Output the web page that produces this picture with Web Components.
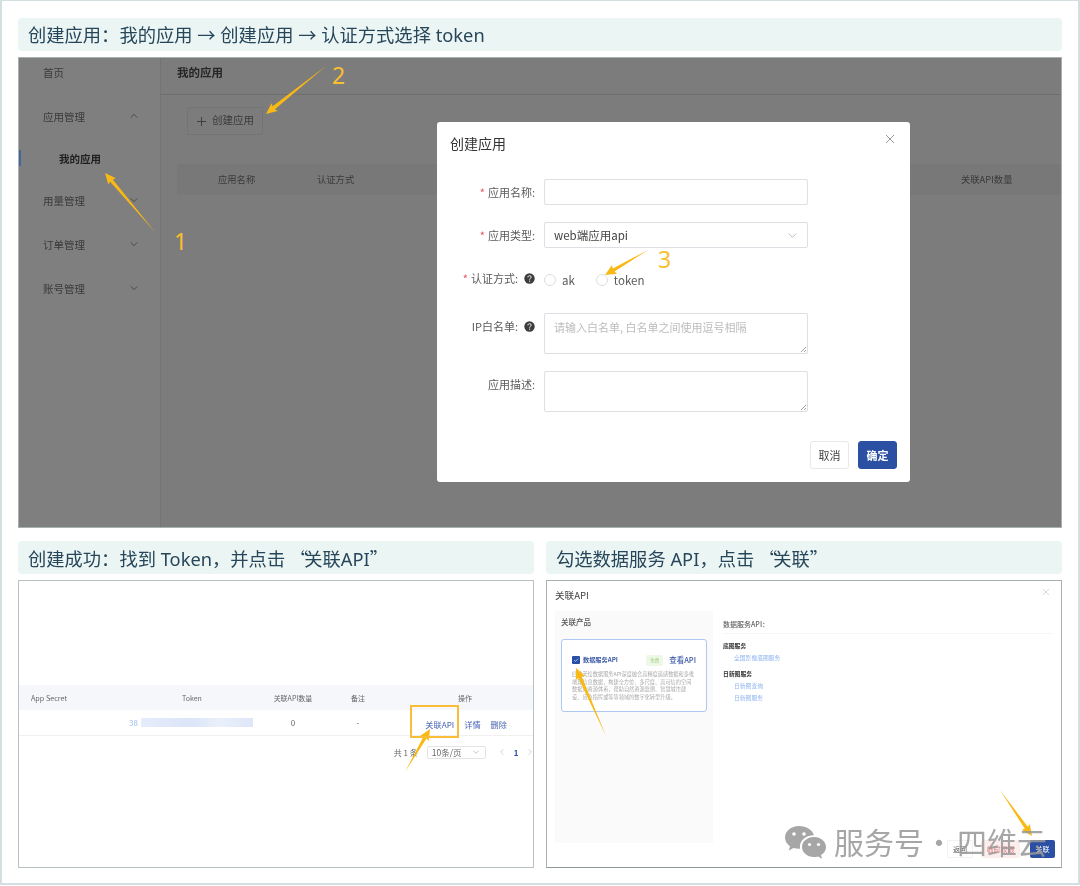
<!DOCTYPE html>
<html lang="zh">
<head>
<meta charset="utf-8">
<title>创建应用</title>
<style>
html, body { margin: 0; padding: 0; background: #fff; }
body { font-family: "Noto Sans CJK SC", "Noto Sans", sans-serif; }
</style>
</head>
<body>
<guide-page>
  <step-block heading="创建应用：我的应用 → 创建应用 → 认证方式选择 token"><console-shot></console-shot></step-block>
  <div slot="bottom"><step-block heading="创建成功：找到 Token，并点击 “关联API”"><token-shot></token-shot></step-block></div>
  <div slot="bottom"><step-block heading="勾选数据服务 API，点击 “关联”"><link-shot></link-shot></step-block></div>
</guide-page>

<script>
const FONT = '"Noto Sans CJK SC", "Noto Sans", sans-serif';
const chevron = (dir, size, color) => `<svg width="${size}" height="${size}" viewBox="0 0 12 12" fill="none" stroke="${color}" stroke-width="1"><path d="${dir == 'up' ? 'M2 8l4-4 4 4' : dir == 'left' ? 'M8 2L4 6l4 4' : dir == 'right' ? 'M4 2l4 4-4 4' : 'M2 4l4 4 4-4'}"/></svg>`;
const helpIcon = `<svg width="11" height="11" viewBox="0 0 11 11"><circle cx="5.5" cy="5.5" r="5.2" fill="#3d3d3d"/><path d="M3.9 4.3c0-2.1 3.3-2.1 3.3-.2 0 1.2-1.6 1.2-1.6 2.5" fill="none" stroke="#fff" stroke-width="1"/><circle cx="5.6" cy="8.1" r=".65" fill="#fff"/></svg>`;
const grip = `<svg width="7" height="7" viewBox="0 0 7 7" stroke="#777" stroke-width=".7"><path d="M1 6l5-5M4 6l2-2"/></svg>`;

class GuidePage extends HTMLElement {
    constructor() {
        super();
        this.attachShadow({mode: 'open'}).innerHTML = `<style>
            :host { display: block; position: relative; width: 1080px; height: 886px; overflow: hidden; font-family: ${FONT}; }
            .frame { box-sizing: border-box; height: 885px; border: solid #d3dfe0; border-width: 1px 2px 2px 2px; padding: 17px 16px 0; display: flex; flex-direction: column; gap: 13px; }
            .bottom { display: grid; grid-template-columns: 516px 516px; gap: 12px; }
        </style>
        <div class="frame"><slot></slot><div class="bottom"><slot name="bottom"></slot></div></div>
        <arrow-layer></arrow-layer>
        <wx-watermark></wx-watermark>`;
    }
}

class StepBlock extends HTMLElement {
    constructor() {
        super();
        this.attachShadow({mode: 'open'}).innerHTML = `<style>
            :host { display: block; }
            .title { height: 33px; box-sizing: border-box; padding: 1px 0 0 10px; margin-bottom: 6px; background: #ebf6f4; border-radius: 4px; color: #28465a; font-family: "Noto Sans", "Noto Sans CJK SC", sans-serif; font-size: 18.3px; line-height: 32px; white-space: nowrap; filter: blur(.35px); }
            .q { font-family: "Noto Sans CJK SC", sans-serif; margin-right: -4px; }
        </style><div class="title"></div><slot></slot>`;
        // the curly quotes keep the wide CJK form, so they get their own font
        this.shadowRoot.querySelector('.title').innerHTML = this.getAttribute('heading').replace(/[“”]/g, '<span class="q">$&</span>');
    }
}

class NavRow extends HTMLElement {
    constructor() {
        super();
        const arrow = this.getAttribute('arrow');
        this.attachShadow({mode: 'open'}).innerHTML = `<style>
            :host { display: flex; align-items: center; justify-content: space-between; height: 44px; padding: 0 21px 0 24px; font-size: 10.5px; color: #3a3a3a; }
            :host([sub]) { height: 40px; padding-left: 40px; font-weight: 700; color: #1f1f1f; position: relative; }
            :host([sub])::before { content: ""; position: absolute; left: 0; top: 12px; width: 2px; height: 16px; background: #44659a; }
            svg { display: block; }
        </style><span><slot></slot></span>${arrow ? chevron(arrow, 10, '#404040') : ''}`;
    }
}

class ConsoleShot extends HTMLElement {
    constructor() {
        super();
        this.attachShadow({mode: 'open'}).innerHTML = `<style>
            :host { display: block; box-sizing: border-box; height: 471px; border: 1px solid #a9b0b0; position: relative; overflow: hidden; background: #7c7c7c; font-size: 10.5px; color: #3a3a3a; filter: blur(.45px); }
            .layout { display: grid; grid-template-columns: 142px 1fr; height: 100%; }
            aside { background: #7f7f7f; border-right: 1px solid #747474; }
            .nav { margin-top: -8px; }
            .head { height: 37px; box-sizing: border-box; padding: 6px 0 0 16px; border-bottom: 1px solid #6e6e6e; font-size: 11.5px; font-weight: 700; color: #262626; line-height: 16px; }
            .add { margin: 12px 0 0 26px; width: 76px; height: 28px; box-sizing: border-box; border: 1px solid #747474; border-radius: 2px; display: flex; align-items: center; gap: 5px; padding-left: 8px; line-height: 24px; }
            .add span { position: relative; top: -1px; }
            .add svg { display: block; }
            .thead { margin: 29px 0 0 16px; height: 31px; background: #787878; position: relative; font-size: 9.3px; }
            .thead span { position: absolute; top: 8px; line-height: 14px; white-space: nowrap; }
        </style>
        <div class="layout">
            <aside><div class="nav">
                <nav-row>首页</nav-row>
                <nav-row arrow="up">应用管理</nav-row>
                <nav-row sub>我的应用</nav-row>
                <nav-row arrow="down">用量管理</nav-row>
                <nav-row arrow="down">订单管理</nav-row>
                <nav-row arrow="down">账号管理</nav-row>
            </div></aside>
            <main>
                <div class="head">我的应用</div>
                <div class="add"><svg width="11" height="11" viewBox="0 0 11 11" stroke="#3f3f3f" stroke-width="1"><path d="M5.5 1v9M1 5.5h9"/></svg><span>创建应用</span></div>
                <div class="thead"><span style="left:41px">应用名称</span><span style="left:140px">认证方式</span><span style="left:784px">关联API数量</span></div>
            </main>
        </div>
        <create-dialog></create-dialog>`;
    }
}

class FormRow extends HTMLElement {
    constructor() {
        super();
        const req = this.hasAttribute('required') ? '<i>*</i>' : '';
        const help = this.hasAttribute('help') ? helpIcon : '';
        this.attachShadow({mode: 'open'}).innerHTML = `<style>
            :host { display: grid; grid-template-columns: 98px 264px; column-gap: 9px; font-size: 11px; color: #5a5a5a; }
            label { display: flex; justify-content: flex-end; align-items: center; gap: 4px; height: 26px; white-space: nowrap; line-height: 14px; }
            i { color: #e8505b; font-style: normal; margin-right: -1px; }
            svg { display: block; margin-left: 2px; }
        </style><label>${req}<span>${this.getAttribute('label')}</span>${help}</label><div><slot></slot></div>`;
    }
}

class CreateDialog extends HTMLElement {
    constructor() {
        super();
        this.attachShadow({mode: 'open'}).innerHTML = `<style>
            :host { position: absolute; left: 418px; top: 64px; width: 473px; height: 360px; box-sizing: border-box; background: #fff; border-radius: 3px; padding: 11px 13px 13px; display: flex; flex-direction: column; font-size: 11px; color: #555; }
            .top { display: flex; justify-content: space-between; height: 46px; }
            h2 { margin: 0; font-size: 14px; font-weight: 400; line-height: 20px; color: #333; }
            .rows { margin-left: -13px; }
            form-row { margin-bottom: 17px; }
            .box { box-sizing: border-box; border: 1px solid #dcdfe3; border-radius: 2px; height: 26px; display: flex; align-items: center; justify-content: space-between; padding: 0 9px; position: relative; }
            .area { align-items: flex-start; padding-top: 6px; line-height: 14px; color: #bdbdbd; height: 41px; }
            .area svg { position: absolute; right: 0; bottom: 0; }
            .radios { display: flex; align-items: center; gap: 6px; height: 26px; margin-top: 2px; margin-bottom: -2px; font-size: 11.5px; }
            .dot { width: 10px; height: 10px; border: 1px solid #dcdfe3; border-radius: 50%; }
            .radios b { font-weight: 400; margin-right: 15px; }
            .btns { margin-top: auto; display: flex; justify-content: flex-end; gap: 9px; }
            .btn { width: 39px; height: 28px; box-sizing: border-box; border: 1px solid #e8e8e8; border-radius: 3px; text-align: center; line-height: 26px; color: #444; }
            .ok { background: #2a4fa3; border-color: #2a4fa3; color: #fff; font-weight: 700; }
            .web { font-size: 11.5px; color: #444; }
        </style>
        <div class="top"><h2>创建应用</h2><svg width="12" height="12" viewBox="0 0 12 12" stroke="#9a9a9a" stroke-width="1" style="margin-right:1px"><path d="M2 2l8 8M10 2l-8 8"/></svg></div>
        <div class="rows">
            <form-row label="应用名称:" required><div class="box"></div></form-row>
            <form-row label="应用类型:" required><div class="box"><span class="web">web端应用api</span>${chevron('down', 11, '#b5b5b5')}</div></form-row>
            <form-row label="认证方式:" required help style="margin-bottom:22px"><div class="radios"><span class="dot"></span><b>ak</b><span class="dot"></span><b>token</b></div></form-row>
            <form-row label="IP白名单:" help><div class="box area">请输入白名单, 白名单之间使用逗号相隔${grip}</div></form-row>
            <form-row label="应用描述:"><div class="box area">${grip}</div></form-row>
        </div>
        <div class="btns"><div class="btn">取消</div><div class="btn ok">确定</div></div>`;
    }
}

class TokenShot extends HTMLElement {
    constructor() {
        super();
        this.attachShadow({mode: 'open'}).innerHTML = `<style>
            :host { display: block; box-sizing: border-box; height: 288px; border: 1px solid #b9c0c2; background: #fff; color: #666; font-size: 7px; filter: blur(.4px); padding-top: 104px; }
            .row { display: grid; grid-template-columns: 112px 122px 80px 50px 1fr; align-items: center; height: 25px; text-align: center; white-space: nowrap; }
            .row > :first-child { text-align: left; padding-left: 12px; }
            .thead { background: #f5f7fa; }
            .tbody { border-bottom: 1px solid #f0f0f0; font-size: 8px; }
            .tok { display: flex; align-items: center; color: #9dbcf0; }
            .tok i { font-style: normal; margin-left: -2px; }
            .tok span { margin-left: 3px; width: 116px; height: 9px; background: linear-gradient(90deg, #e6ecfa, #dbe5f8 45%, #eaf0fb 70%, #dde6f8); }
            .ops { display: flex; justify-content: flex-end; gap: 10px; padding-right: 26px; color: #4a66b4; font-size: 8.2px; position: relative; top: 1px; }
            .pager { display: flex; align-items: center; justify-content: flex-end; margin-top: 9px; font-size: 8px; height: 14px; }
            .size { margin-left: 9px; width: 59px; height: 13px; box-sizing: border-box; border: 1px solid #e4e4e4; border-radius: 2px; display: flex; align-items: center; justify-content: space-between; padding: 0 6px 0 4px; font-size: 8.5px; }
            .page { color: #2a4fa3; font-weight: 700; margin: 0 7.5px 0 8px; }
            .pager svg { display: block; }
            .pager svg:last-child { margin-right: -1px; }
        </style>
        <div class="row thead"><div style="font-size:7.2px">App Secret</div><div>Token</div><div>关联API数量</div><div>备注</div><div style="padding-left:14px">操作</div></div>
        <div class="row tbody"><div></div><div class="tok"><i>38</i><span></span></div><div>0</div><div>-</div><div class="ops"><span>关联API</span><span>详情</span><span>删除</span></div></div>
        <div class="pager"><span>共 1 条</span><div class="size">10条/页${chevron('down', 8, '#aaa')}</div><span style="width:12px"></span>${chevron('left', 8, '#bbb')}<span class="page">1</span>${chevron('right', 8, '#bbb')}</div>`;
    }
}

class LinkShot extends HTMLElement {
    constructor() {
        super();
        this.attachShadow({mode: 'open'}).innerHTML = `<style>
            :host { display: block; box-sizing: border-box; height: 288px; border: 1px solid #a9b0b2; border-bottom-color: #8f9698; background: #fff; color: #444; filter: blur(.4px); padding: 7px 8px 0; position: relative; }
            .top { display: flex; justify-content: space-between; height: 23px; font-size: 9.6px; line-height: 14px; }
            .body { display: grid; grid-template-columns: 158px 1fr; column-gap: 10px; height: 232px; }
            .left { background: #fafafa; padding: 5px 6px 0; font-size: 7.5px; font-weight: 500; color: #555; line-height: 12px; }
            .card { margin-top: 11px; height: 73px; box-sizing: border-box; border: 1px solid #adc8f2; border-radius: 3px; background: #fff; padding: 14px 10px 0; }
            .line { display: flex; align-items: center; font-size: 6.2px; color: #3d5aa8; font-weight: 700; height: 12px; }
            .check { width: 8px; height: 8px; background: #2a4fa3; border-radius: 1px; margin-right: 3px; display: block; }
            .tag { margin-left: auto; background: #eef8e6; color: #a5cf88; font-size: 4.5px; padding: 0 4px; line-height: 11px; border-radius: 2px; font-weight: 400; }
            .view { margin-left: 6px; font-size: 7.5px; font-weight: 500; }
            p { margin: 4px 0 0; font-size: 5.2px; line-height: 7.7px; color: #a8a8a8; font-weight: 400; }
            .right { padding: 7px 0 0; font-size: 5.5px; line-height: 11px; }
            .cap { font-size: 7px; font-weight: 500; color: #666; height: 15px; line-height: 12px; border-bottom: 1px solid #f6f6f6; margin-bottom: 7px; }
            h4 { margin: 0; font-size: 5.8px; font-weight: 700; color: #333; line-height: 10px; }
            .link { color: #8fb4ef; padding-left: 11px; font-size: 5.8px; line-height: 12px; display: block; }
            h4 + .link { margin-top: 1px; }
            .link + h4 { margin-top: 5px; }
            .foot { position: absolute; right: 6px; bottom: 9px; display: flex; font-size: 7px; white-space: nowrap; }
            .b { box-sizing: border-box; height: 18px; line-height: 18px; border-radius: 2px; text-align: center; }
            .back { width: 26px; border: 1px solid #f2f2f2; line-height: 16px; color: #555; margin-right: 8px; }
            .warn { width: 39px; background: #fdeeee; color: #e07a7a; margin-right: 10px; }
            .go { width: 25px; background: #2a4fa3; color: #fff; }
        </style>
        <div class="top"><span>关联API</span><svg width="8" height="8" viewBox="0 0 8 8" stroke="#cfcfcf" stroke-width=".8" style="margin:0 3px 0 0"><path d="M1 1l6 6M7 1L1 7"/></svg></div>
        <div class="body">
            <div class="left">关联产品
                <div class="card">
                    <div class="line"><svg class="check" viewBox="0 0 8 8"><path d="M2 4l1.500 1.500L6 2.700" fill="none" stroke="#cfe0ff" stroke-width=".7"/></svg>数据服务API<span class="tag">免费</span><span class="view">查看API</span></div>
                    <p>四维天绘数据服务API深度融合高精度遥感数据和多维地理信息数据，构建全方位、多尺度、高可信的空间数据的资源体系，帮助自然资源监测、智慧城市建设、应急指挥或等等领域的数字化转型升级。</p>
                </div>
            </div>
            <div class="right">
                <div class="cap">数据服务API：</div>
                <h4>底图服务</h4><span class="link">全国影像底图服务</span>
                <h4>日新图服务</h4><span class="link">日新图查询</span><span class="link">日新图服务</span>
            </div>
        </div>
        <div class="foot"><span class="b back">返回</span><span class="b warn">临时权限</span><span class="b go">关联</span></div>`;
    }
}

class ArrowLayer extends HTMLElement {
    constructor() {
        super();
        const arrows = [[155,232,105,173],[326,66,266,114],[648,250,605,275],[405,772,430,729],[606,736,576,668],[1000,790,1032,836]];
        const shapes = arrows.map(([x1, y1, x2, y2]) => {
            const len = Math.hypot(x2 - x1, y2 - y1), ux = (x2 - x1) / len, uy = (y2 - y1) / len, nx = -uy, ny = ux;
            const p = (along, side) => (x1 + ux * along + nx * side).toFixed(1) + ',' + (y1 + uy * along + ny * side).toFixed(1);
            const neck = len - 10;
            return `<polygon points="${p(0,0)} ${p(neck,1.8)} ${p(neck - 1,5)} ${p(len,0)} ${p(neck - 1,-5)} ${p(neck,-1.8)}"/>`;
        }).join('');
        this.attachShadow({mode: 'open'}).innerHTML = `<style>
            :host { position: absolute; inset: 0; pointer-events: none; }
            svg { display: block; }
            text { font: 23px "Noto Sans", sans-serif; fill: #f9bf2f; }
        </style>
        <svg width="1080" height="886"><g fill="#f8b914">${shapes}</g>
            <rect x="411" y="706" width="47" height="31" fill="none" stroke="#fbbd35" stroke-width="2"/>
            <text x="174" y="250">1</text><text x="332" y="84">2</text><text x="658" y="268">3</text>
        </svg>`;
    }
}

class WxWatermark extends HTMLElement {
    constructor() {
        super();
        this.attachShadow({mode: 'open'}).innerHTML = `<style>
            :host { position: absolute; left: 785px; top: 820px; display: flex; align-items: center; gap: 8px; color: rgba(150,150,150,.85); font-size: 30px; white-space: nowrap; filter: blur(.3px); }
            svg { display: block; }
            span { line-height: 42px; padding-bottom: 3px; }
            b { font-weight: 400; padding-right: 3px; }
        </style>
        <svg width="41" height="34" viewBox="0 0 41 34" fill="#a6a6a6">
            <path d="M14 0C6 0 0 5.300 0 11.500c0 3.600 2 6.700 5 8.800L3.800 24.500l4.700-2.500c1.700.5 3.500.8 5.500.8h1C14 15 20 9.500 29 9.300 27.500 4 21.500 0 14 0z"/>
            <path d="M29 11c-6.800 0-12 4.400-12 10s5.200 10 12 10c1.400 0 2.800-.2 4-.6l4 2.400-1-3.700c3-1.800 5-4.700 5-8.100 0-5.600-5.200-10-12-10z"/>
            <g fill="#fff"><circle cx="9" cy="8" r="1.800"/><circle cx="19" cy="8" r="1.800"/><circle cx="24.500" cy="18.500" r="1.600"/><circle cx="33.500" cy="18.500" r="1.600"/></g>
        </svg>
        <span>服务号<b>·</b>四维云</span>`;
    }
}

window.customElements.define('nav-row', NavRow);
window.customElements.define('form-row', FormRow);
window.customElements.define('create-dialog', CreateDialog);
window.customElements.define('console-shot', ConsoleShot);
window.customElements.define('token-shot', TokenShot);
window.customElements.define('link-shot', LinkShot);
window.customElements.define('arrow-layer', ArrowLayer);
window.customElements.define('wx-watermark', WxWatermark);
window.customElements.define('step-block', StepBlock);
window.customElements.define('guide-page', GuidePage);
</script>
</body>
</html>
